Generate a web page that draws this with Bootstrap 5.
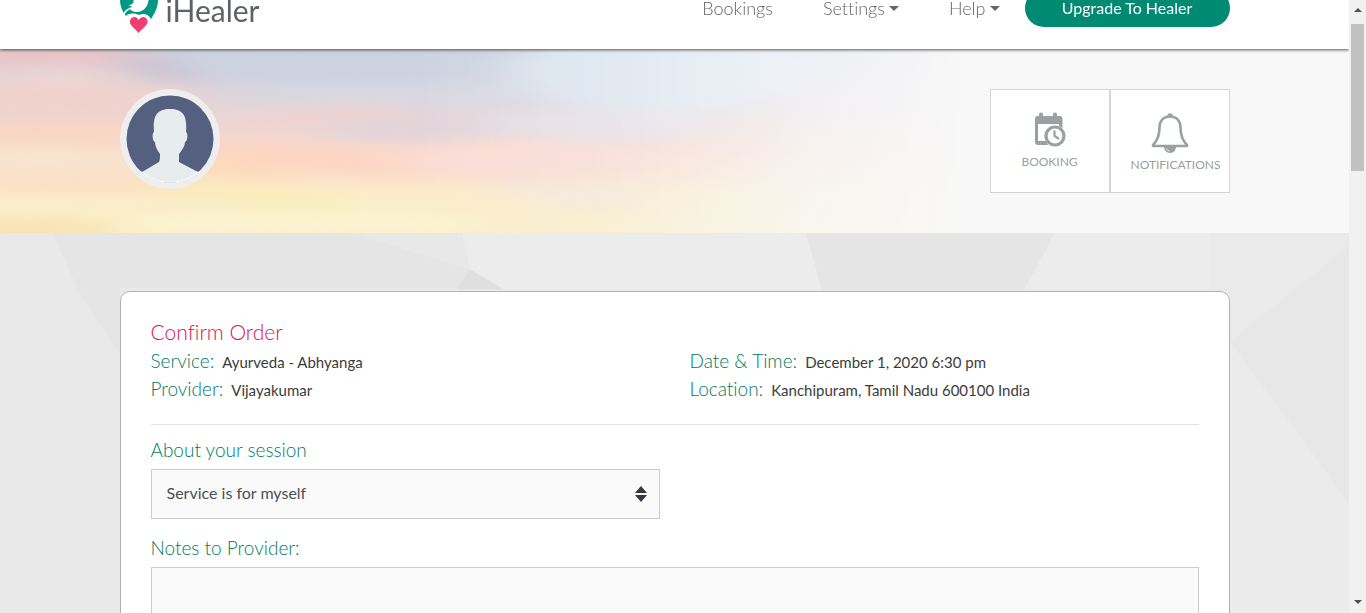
<!DOCTYPE html>
<html lang="en">
<head>
<meta charset="utf-8">
<meta name="viewport" content="width=device-width, initial-scale=1">
<title>iHealer - Confirm Order</title>
<link href="https://cdn.jsdelivr.net/npm/bootstrap@5.3.0/dist/css/bootstrap.min.css" rel="stylesheet">
<style>
:root{--teal:#008a73;--teal-text:#007a66;--pink:#dc1250;--line:#ccc}
body{font-family:Lato,"Liberation Sans",sans-serif;background:#ebebeb;color:#3c3c3c;font-variant-ligatures:none}
.page-wrap{--bs-gutter-x:30px}
.page-wrap.container-xl{max-width:1140px}
.site-head{margin-top:-33px;height:82px;background:#fff;box-shadow:0 1px 3px rgba(0,0,0,.65);z-index:2}
.brand-name{font-size:30px;line-height:36px;color:#5f6168;padding-top:4px}
.top-links{gap:50px;font-size:18px;font-weight:300}
.top-links a{color:#666;text-decoration:none}
.top-links .dropdown-toggle::after{border-width:5px;border-bottom:0;vertical-align:4px;margin-left:4px}
.btn-upgrade{background:var(--teal);color:#fff;width:205px;height:38px;font-size:16px;line-height:24px;margin-left:25px}
.btn-upgrade:hover{background:#00705d;color:#fff}
.hero{background:#f8f8f8;padding:40px 0}
.hero .backdrop,.order .backdrop{z-index:-1}
.avatar{width:100px;height:100px}
.tile{width:120px;height:104px;border:1px solid #d5d5d5;background:#fff;padding:22px 20px;font-size:12px;line-height:20px;color:#9aa09f;text-decoration:none;white-space:nowrap}
.order{padding-top:58px}
.order-card{border:1px solid #b3b3b3;border-radius:10px;background:#fff;padding:26px 30px 40px}
.order-card h1{font-size:21px;line-height:28px;font-weight:300;color:var(--pink);margin:0 0 1px}
.facts{font-size:15px}
.facts .col-6{height:28px}
.facts dt,.field-label{font-size:19px;line-height:28px;font-weight:300;color:var(--teal-text)}
.facts dt{margin-right:8px}
.rule{border-top:1px solid #e3e3e3;margin:21px 0 11px}
.field-label{margin-bottom:5px}
.field{border:1px solid var(--line);border-radius:0;background-color:#fafafa;color:#495057;font-size:16px}
select.field{height:50px;padding:0 36px 3px 15px;margin-bottom:15px;background-size:12px 16px;background-position:right 12px center;background-image:url("data:image/svg+xml,%3Csvg xmlns='http://www.w3.org/2000/svg' viewBox='0 0 12 16'%3E%3Cpath fill='%23343a40' d='M0 7 6 0l6 7zM0 9h12l-6 7z'/%3E%3C/svg%3E")}
textarea.field{height:120px}
.scroll-rail{width:17px;background:#f1f1f1}
.scroll-thumb{width:13px;height:147px;background:#c1c1c1;margin-top:7px}
</style>
</head>
<body class="d-flex vh-100 overflow-hidden">
<div class="flex-grow-1 overflow-hidden">
  <header class="site-head position-relative">
    <div class="container-xl page-wrap h-100 d-flex align-items-center justify-content-between">
      <a href="#" class="d-flex align-items-center text-decoration-none" aria-label="iHealer home">
        <svg width="38" height="52" viewBox="0 0 38 52" aria-hidden="true">
          <path fill="#009883" d="M19 0C7 0 0 8 0 18c0 6 2 11 6 16 3-3 8-3 13-1 5-2 9-1 12 4 4-6 7-12 7-19C38 8 30 0 19 0z"/>
          <path fill="#fff" d="M12 4c9 0 15 5 16.500 11 1 8-4.500 15-11.500 15-4 0-7-2-8.500-4l4-1-4-2c4 0 5.500-2 5-5-1-4 2-8-1.500-14z"/>
          <path fill="none" stroke="#fff" stroke-width="1.500" d="M4 33c.5-3 2-4.500 5-6"/>
          <path fill="#f03e74" stroke="#fff" stroke-width="1.800" d="M18.500 52.500C15 47 9 45 9 40c0-6 7-7.500 9.700-3.500 3-4 9.800-2.500 9.800 3.500 0 5-6.500 7-10 12.500z"/>
        </svg>
        <span class="brand-name ms-2">iHealer</span>
      </a>
      <nav class="d-flex align-items-center" aria-label="Main">
        <div class="top-links d-flex">
          <a href="#">Bookings</a>
          <a href="#" class="dropdown-toggle">Settings</a>
          <a href="#" class="dropdown-toggle">Help</a>
        </div>
        <button type="button" class="btn btn-upgrade rounded-pill py-0">Upgrade To Healer</button>
      </nav>
    </div>
  </header>

  <section class="hero position-relative z-0">
    <svg class="backdrop position-absolute top-0 start-0 w-100 h-100" viewBox="0 0 1349 184" preserveAspectRatio="none" aria-hidden="true">
      <defs>
        <linearGradient id="dusk" x1="0" y1="0" x2="0" y2="1">
          <stop offset="0" stop-color="#cbd0df"/><stop offset=".3" stop-color="#e2d5da"/><stop offset=".55" stop-color="#f9d9cc"/><stop offset=".8" stop-color="#fcecc9"/><stop offset="1" stop-color="#faefca"/>
        </linearGradient>
        <linearGradient id="haze" x1="0" y1="0" x2="1" y2="0">
          <stop offset=".3" stop-color="#f8f8f8" stop-opacity="0"/><stop offset=".44" stop-color="#f5f6f9" stop-opacity=".2"/><stop offset=".6" stop-color="#f7f8fa" stop-opacity=".75"/><stop offset=".72" stop-color="#f8f8f8"/>
        </linearGradient>
        <filter id="soft" x="-30%" y="-100%" width="160%" height="300%"><feGaussianBlur stdDeviation="26 7"/></filter>
      </defs>
      <rect width="1349" height="184" fill="url(#dusk)"/>
      <g filter="url(#soft)">
        <ellipse cx="20" cy="5" rx="120" ry="16" fill="#e6c5c9"/>
        <ellipse cx="60" cy="25" rx="90" ry="8" fill="#e8d6d6"/>
        <ellipse cx="50" cy="50" rx="150" ry="18" fill="#f0d2cc"/>
        <ellipse cx="160" cy="20" rx="42" ry="10" fill="#cbbfce" transform="rotate(10 160 20)"/>
        <ellipse cx="350" cy="18" rx="170" ry="20" fill="#cdd3e1"/>
        <ellipse cx="440" cy="48" rx="200" ry="12" fill="#d9d8e2"/>
        <ellipse cx="660" cy="20" rx="150" ry="44" fill="#dbe5ef"/>
        <ellipse cx="70" cy="84" rx="130" ry="13" fill="#f8d5c3"/>
        <ellipse cx="310" cy="68" rx="90" ry="9" fill="#f0d1cf" transform="rotate(-5 310 68)"/>
        <ellipse cx="420" cy="80" rx="100" ry="11" fill="#e0d4db" transform="rotate(-2 420 80)"/>
        <ellipse cx="600" cy="75" rx="110" ry="16" fill="#e5dfe6"/>
        <ellipse cx="330" cy="110" rx="130" ry="12" fill="#fdd4c3" transform="rotate(5 330 110)"/>
        <ellipse cx="530" cy="112" rx="140" ry="18" fill="#fadcd4"/>
        <ellipse cx="40" cy="108" rx="120" ry="12" fill="#f8e4cf"/>
        <ellipse cx="220" cy="118" rx="80" ry="8" fill="#fddab6" transform="rotate(5 220 118)"/>
        <ellipse cx="80" cy="136" rx="120" ry="6" fill="#fadcc0"/>
        <ellipse cx="250" cy="146" rx="100" ry="8" fill="#faebb7" transform="rotate(5 250 146)"/>
        <ellipse cx="300" cy="174" rx="190" ry="14" fill="#fbf3cd"/>
        <ellipse cx="30" cy="180" rx="90" ry="9" fill="#f9dfae"/>
        <ellipse cx="570" cy="145" rx="70" ry="7" fill="#f2e5e1" transform="rotate(6 570 145)"/>
      </g>
      <rect width="1349" height="184" fill="url(#haze)"/>
    </svg>
    <div class="container-xl page-wrap d-flex justify-content-between">
      <svg class="avatar" viewBox="0 0 100 100" role="img" aria-label="Profile photo">
        <circle cx="50" cy="50" r="50" fill="#eee"/>
        <circle cx="50" cy="50" r="43.500" fill="#556080"/>
        <path fill="#e7edee" d="M22 83l17-10c1-2 1-5 1-8-3-4-5-8-5-12-3-1-3-9-1-10-1-14 1-23 16-23s17 9 16 23c2 1 2 9-1 10 0 4-3 8-6 12v8l19 10a44 44 0 0 1-56 0z"/>
        <path fill="none" stroke="#fbfbfb" stroke-width="1.200" d="M22 83a43.500 43.500 0 0 0 56 0"/>
      </svg>
      <nav class="d-flex" aria-label="Account">
        <a href="#" class="tile text-center">
          <svg class="d-block mx-auto mb-1" width="32" height="36" viewBox="0 0 32 36" aria-hidden="true">
            <path fill="#9aa2a1" d="M5 2.500a2 2 0 0 1 4 0V4h10V2.500a2 2 0 0 1 4 0V4h2.500A3 3 0 0 1 28.500 7v9L25 14v-2H4v17h8l2 4H4a3 3 0 0 1-3-3V7a3 3 0 0 1 3-3h1z"/>
            <circle cx="21" cy="24" r="9" fill="#fff" stroke="#9aa2a1" stroke-width="3.200"/>
            <path fill="none" stroke="#9aa2a1" stroke-width="2.200" d="M20.500 18.500V24l4.500 3"/>
          </svg>
          BOOKING
        </a>
        <a href="#" class="tile text-center">
          <svg class="d-block mx-auto" width="38" height="43" viewBox="0 0 38 43" aria-hidden="true">
            <path fill="#9aa2a1" d="M13 34h12c0 4-2 7-6 7s-6-3-6-7z"/>
            <circle cx="19" cy="4" r="2.700" fill="#9aa2a1"/>
            <path fill="#fff" stroke="#9aa2a1" stroke-width="2.600" stroke-linejoin="round" d="M19 4.500c-7 0-10.500 5-10.500 11 0 8-2 13-6.500 17.500V34h34v-1c-4.500-4.500-6.500-9.500-6.500-17.500 0-6-3.500-11-10.500-11z"/>
            <path fill="none" stroke="#fff" d="M15.500 36.500c.5 1.500 1.500 2.200 3 2.500"/>
          </svg>
          NOTIFICATIONS
        </a>
      </nav>
    </div>
  </section>

  <main class="order position-relative z-0">
    <svg class="backdrop position-absolute top-0 start-0 w-100 h-100" viewBox="0 0 1349 520" preserveAspectRatio="none" aria-hidden="true">
      <rect width="1349" height="520" fill="#e9e9e9"/>
      <path fill="#e5e5e5" d="M52 0h300l118 38-12 20H120v70L82 68z"/>
      <path fill="#e8e8e8" d="M352 0h110l8 38z"/>
      <path fill="#dfdfdf" d="M470 38l-13 21h49z"/>
      <path fill="#ececec" d="M462 0h344l16 60H505l-35-22z"/>
      <path fill="#e6e5e5" d="M806 0h249l-31 60H822z"/>
      <path fill="#ececec" d="M1055 0h155v60h-186z"/>
      <path fill="#eaeaea" d="M1210 0h139v14l-119 100V60h-20z"/>
      <path fill="#e7e7e7" d="M1349 14v270l-119-170z"/>
      <path fill="#ebebeb" d="M1230 114l119 170v236h-119z"/>
    </svg>
    <div class="container-xl page-wrap">
      <form class="order-card">
        <h1>Confirm Order</h1>
        <dl class="row page-wrap facts mb-0">
          <div class="col-6 d-flex align-items-baseline"><dt>Service:</dt><dd class="mb-0">Ayurveda - Abhyanga</dd></div>
          <div class="col-6 d-flex align-items-baseline"><dt>Date &amp; Time:</dt><dd class="mb-0">December 1, 2020 6:30 pm</dd></div>
          <div class="col-6 d-flex align-items-baseline"><dt>Provider:</dt><dd class="mb-0">Vijayakumar</dd></div>
          <div class="col-6 d-flex align-items-baseline"><dt>Location:</dt><dd class="mb-0">Kanchipuram, Tamil Nadu 600100 India</dd></div>
        </dl>
        <div class="rule"></div>
        <div class="row page-wrap">
          <div class="col-6">
            <label for="session" class="field-label d-block">About your session</label>
            <select id="session" class="form-select field"><option>Service is for myself</option></select>
          </div>
        </div>
        <label for="notes" class="field-label d-block">Notes to Provider:</label>
        <textarea id="notes" class="form-control field"></textarea>
      </form>
    </div>
  </main>
</div>
<div class="scroll-rail d-flex flex-column align-items-center flex-shrink-0 py-2" aria-hidden="true">
  <svg width="8" height="9" viewBox="0 0 8 9"><path fill="#505050" d="M0 4l4-4 4 4z"/></svg>
  <div class="scroll-thumb"></div>
  <svg class="mt-auto" width="8" height="5" viewBox="0 0 8 5"><path fill="#505050" d="M0 0l4 4 4-4z"/></svg>
</div>
<script src="https://cdn.jsdelivr.net/npm/bootstrap@5.3.0/dist/js/bootstrap.bundle.min.js"></script>
</body>
</html>
